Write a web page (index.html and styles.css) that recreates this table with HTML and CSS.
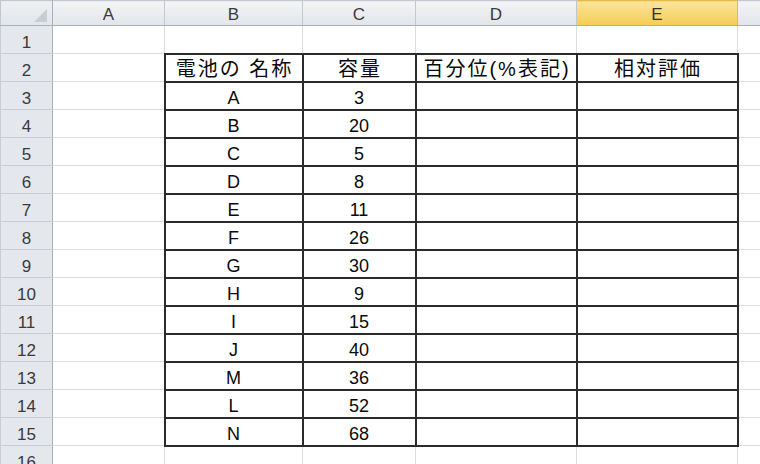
FILE: index.html
```html
<!DOCTYPE html>
<html lang="ja">
<head>
<meta charset="utf-8">
<title>Sheet</title>
<link rel="stylesheet" href="styles.css">
</head>
<body>
<table class="sheet">
<colgroup>
<col class="w-rh"><col class="w-a"><col class="w-b"><col class="w-c"><col class="w-d"><col class="w-e"><col class="w-f">
</colgroup>
<thead>
<tr>
<th class="corner"><span class="tri"></span></th>
<th class="ch">A</th><th class="ch">B</th><th class="ch">C</th><th class="ch">D</th><th class="ch sel">E</th><th class="ch"></th>
</tr>
</thead>
<tbody>
<tr><th class="rh">1</th><td></td><td></td><td></td><td></td><td></td><td></td></tr>
<tr><th class="rh">2</th><td></td><td class="t j">電池の 名称</td><td class="t j">容量</td><td class="t j">百分位(%表記)</td><td class="t j">相対評価</td><td></td></tr>
<tr><th class="rh">3</th><td></td><td class="t">A</td><td class="t">3</td><td class="t"></td><td class="t"></td><td></td></tr>
<tr><th class="rh">4</th><td></td><td class="t">B</td><td class="t">20</td><td class="t"></td><td class="t"></td><td></td></tr>
<tr><th class="rh">5</th><td></td><td class="t">C</td><td class="t">5</td><td class="t"></td><td class="t"></td><td></td></tr>
<tr><th class="rh">6</th><td></td><td class="t">D</td><td class="t">8</td><td class="t"></td><td class="t"></td><td></td></tr>
<tr><th class="rh">7</th><td></td><td class="t">E</td><td class="t">11</td><td class="t"></td><td class="t"></td><td></td></tr>
<tr><th class="rh">8</th><td></td><td class="t">F</td><td class="t">26</td><td class="t"></td><td class="t"></td><td></td></tr>
<tr><th class="rh">9</th><td></td><td class="t">G</td><td class="t">30</td><td class="t"></td><td class="t"></td><td></td></tr>
<tr><th class="rh">10</th><td></td><td class="t">H</td><td class="t">9</td><td class="t"></td><td class="t"></td><td></td></tr>
<tr><th class="rh">11</th><td></td><td class="t">I</td><td class="t">15</td><td class="t"></td><td class="t"></td><td></td></tr>
<tr><th class="rh">12</th><td></td><td class="t">J</td><td class="t">40</td><td class="t"></td><td class="t"></td><td></td></tr>
<tr><th class="rh">13</th><td></td><td class="t">M</td><td class="t">36</td><td class="t"></td><td class="t"></td><td></td></tr>
<tr><th class="rh">14</th><td></td><td class="t">L</td><td class="t">52</td><td class="t"></td><td class="t"></td><td></td></tr>
<tr><th class="rh">15</th><td></td><td class="t">N</td><td class="t">68</td><td class="t"></td><td class="t"></td><td></td></tr>
<tr><th class="rh">16</th><td></td><td></td><td></td><td></td><td></td><td></td></tr>
</tbody>
</table>
</body>
</html>
```
FILE: styles.css
```css
html, body {
  margin: 0;
  padding: 0;
  background: #fff;
  overflow: hidden;
  width: 760px;
  height: 464px;
}
.sheet {
  border-collapse: collapse;
  table-layout: fixed;
  width: 836px;
  font-family: "Liberation Sans", "Noto Sans CJK JP", sans-serif;
  font-size: 18px;
  color: #111;
}
.w-rh { width: 52px; }
.w-a { width: 112px; }
.w-b { width: 138px; }
.w-c { width: 113px; }
.w-d { width: 161px; }
.w-e { width: 161px; }
.w-f { width: 99px; }
thead tr { height: 25px; }
tbody tr { height: 28px; }
th, td {
  padding: 0;
  text-align: center;
  vertical-align: middle;
  line-height: 1;
  white-space: nowrap;
  overflow: hidden;
}
tbody td, tbody th {
  padding-top: 5px;
}
td {
  border: 1px solid #dadcdf;
}
.ch {
  background: linear-gradient(#f3f4f6, #e2e5e9);
  border: 1px solid #c3c8ce;
  border-bottom-color: #a9b0b8;
  font-weight: normal;
  color: #3a3a3a;
  font-size: 17px;
  padding-top: 3px;
}
.ch.sel {
  background: linear-gradient(#fbe59c, #f5cd55);
  border-color: #e2b94c;
  border-bottom-color: #e5a933;
  color: #333;
}
.corner {
  position: relative;
  background: linear-gradient(#eef0f2, #e2e5e9);
  border: 1px solid #c3c8ce;
  border-right-color: #a9b0b8;
  border-bottom-color: #a9b0b8;
}
.tri {
  position: absolute;
  right: 5px;
  bottom: 3px;
  width: 0;
  height: 0;
  border-left: 13px solid transparent;
  border-bottom: 13px solid #c9cdd2;
}
.rh {
  background: #e4e7eb;
  border: 1px solid #c8cdd3;
  border-right-color: #a9b0b8;
  font-weight: normal;
  color: #3a3a3a;
  font-size: 17px;
}
td.t {
  border: 2px solid #2b2b2b;
  color: #0a0a0a;
}
td.j {
  font-size: 20px;
  letter-spacing: 2px;
  text-indent: 2px;
  padding-top: 2px;
}
```
